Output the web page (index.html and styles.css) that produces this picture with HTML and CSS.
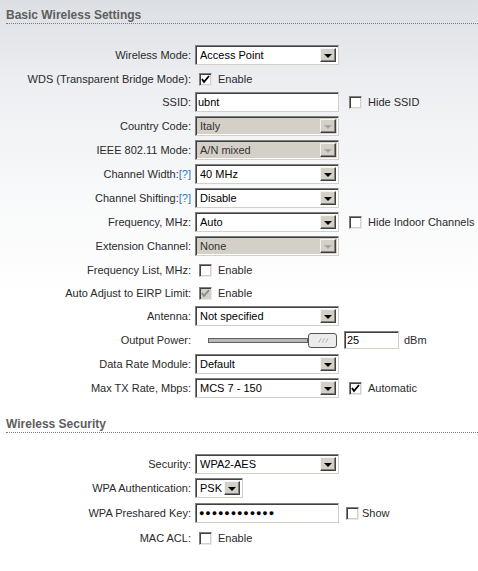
FILE: index.html
```html
<!DOCTYPE html>
<html>
<head>
<meta charset="utf-8">
<link rel="stylesheet" href="styles.css">
</head>
<body>
<div class="page">
  <h2 class="section-title">Basic Wireless Settings</h2>
  <div class="form first">
    <div class="row">
      <span class="lbl">Wireless Mode:</span>
      <div class="select"><span class="val">Access Point</span><span class="btn"><i class="arrow"></i></span></div>
    </div>
    <div class="row cbrow">
      <span class="lbl">WDS (Transparent Bridge Mode):</span>
      <span class="cb checked ml4"><svg viewBox="0 0 11 11"><polyline points="2,5 4,8 9,2"/></svg></span><span class="cbtext">Enable</span>
    </div>
    <div class="row">
      <span class="lbl">SSID:</span>
      <div class="input"><span class="val">ubnt</span></div>
      <span class="cb ml10"></span><span class="cbtext">Hide SSID</span>
    </div>
    <div class="row">
      <span class="lbl">Country Code:</span>
      <div class="select disabled"><span class="val">Italy</span><span class="btn"><i class="arrow"></i></span></div>
    </div>
    <div class="row">
      <span class="lbl">IEEE 802.11 Mode:</span>
      <div class="select disabled"><span class="val">A/N mixed</span><span class="btn"><i class="arrow"></i></span></div>
    </div>
    <div class="row">
      <span class="lbl">Channel Width:<a class="help">[?]</a></span>
      <div class="select"><span class="val">40 MHz</span><span class="btn"><i class="arrow"></i></span></div>
    </div>
    <div class="row">
      <span class="lbl">Channel Shifting:<a class="help">[?]</a></span>
      <div class="select"><span class="val">Disable</span><span class="btn"><i class="arrow"></i></span></div>
    </div>
    <div class="row">
      <span class="lbl">Frequency, MHz:</span>
      <div class="select"><span class="val">Auto</span><span class="btn"><i class="arrow"></i></span></div>
      <span class="cb ml10"></span><span class="cbtext">Hide Indoor Channels</span>
    </div>
    <div class="row">
      <span class="lbl">Extension Channel:</span>
      <div class="select disabled"><span class="val">None</span><span class="btn"><i class="arrow"></i></span></div>
    </div>
    <div class="row cbrow">
      <span class="lbl">Frequency List, MHz:</span>
      <span class="cb ml4"></span><span class="cbtext">Enable</span>
    </div>
    <div class="row cbrow">
      <span class="lbl">Auto Adjust to EIRP Limit:</span>
      <span class="cb checked disabled ml4"><svg viewBox="0 0 11 11"><polyline points="2,5 4,8 9,2"/></svg></span><span class="cbtext">Enable</span>
    </div>
    <div class="row">
      <span class="lbl">Antenna:</span>
      <div class="select"><span class="val">Not specified</span><span class="btn"><i class="arrow"></i></span></div>
    </div>
    <div class="row">
      <span class="lbl">Output Power:</span>
      <div class="slider">
        <span class="track"></span>
        <span class="thumb"><svg viewBox="0 0 29 15"><line x1="10" y1="10" x2="13" y2="5"/><line x1="14" y1="10" x2="17" y2="5"/><line x1="18" y1="10" x2="21" y2="5"/></svg></span>
      </div>
      <div class="input small"><span class="val">25</span></div>
      <span class="unit">dBm</span>
    </div>
    <div class="row">
      <span class="lbl">Data Rate Module:</span>
      <div class="select"><span class="val">Default</span><span class="btn"><i class="arrow"></i></span></div>
    </div>
    <div class="row">
      <span class="lbl">Max TX Rate, Mbps:</span>
      <div class="select"><span class="val">MCS 7 - 150</span><span class="btn"><i class="arrow"></i></span></div>
      <span class="cb checked ml10"><svg viewBox="0 0 11 11"><polyline points="2,5 4,8 9,2"/></svg></span><span class="cbtext">Automatic</span>
    </div>
  </div>

  <h2 class="section-title second">Wireless Security</h2>
  <div class="form">
    <div class="row">
      <span class="lbl">Security:</span>
      <div class="select"><span class="val">WPA2-AES</span><span class="btn"><i class="arrow"></i></span></div>
    </div>
    <div class="row r25">
      <span class="lbl">WPA Authentication:</span>
      <div class="select narrow"><span class="val">PSK</span><span class="btn"><i class="arrow"></i></span></div>
    </div>
    <div class="row r25">
      <span class="lbl">WPA Preshared Key:</span>
      <div class="input"><span class="val dots">&#9679;&#9679;&#9679;&#9679;&#9679;&#9679;&#9679;&#9679;&#9679;&#9679;&#9679;&#9679;</span></div>
      <span class="cb ml7"></span><span class="cbtext tight">Show</span>
    </div>
    <div class="row cbrow">
      <span class="lbl">MAC ACL:</span>
      <span class="cb ml4"></span><span class="cbtext">Enable</span>
    </div>
  </div>
</div>
</body>
</html>
```

FILE: styles.css
```css
html, body {
  margin: 0;
  padding: 0;
}
body {
  width: 478px;
  height: 571px;
  overflow: hidden;
  background: linear-gradient(to bottom, #dcdfe4 0px, #eceef1 80px, #f7f8f9 180px, #ffffff 300px);
  font-family: "Liberation Sans", Arial, sans-serif;
  font-size: 11px;
  color: #222;
}
.page {
  padding-top: 8px;
}
.section-title {
  margin: 0 0 0 6px;
  padding: 0 0 1px 0;
  font-size: 12px;
  line-height: 14px;
  font-weight: bold;
  color: #5e5e5e;
  border-bottom: 1px dotted #7a7a7a;
}
.section-title.second {
  margin-top: 19px;
}
.form {
  margin-top: 21px;
}
.row {
  display: flex;
  align-items: center;
  height: 20px;
  margin-bottom: 4px;
  white-space: nowrap;
}
.row.cbrow {
  margin-bottom: 3px;
}
.row.r25 {
  margin-bottom: 5px;
}
.lbl {
  width: 191px;
  padding-right: 4px;
  text-align: right;
  color: #2a2a2a;
}
.help {
  color: #2b7bbf;
}
.select, .input {
  box-sizing: border-box;
  width: 144px;
  height: 20px;
  display: flex;
  align-items: stretch;
  background: #fff;
  border: 1px solid;
  border-color: #7f7f7f #d4d0c8 #d4d0c8 #7f7f7f;
  box-shadow: inset 1px 1px 0 #404040, inset -1px -1px 0 #ffffff;
  color: #000;
}
.select.disabled {
  background: #d4d0c8;
  color: #333;
}
.select.narrow {
  width: 48px;
}
.val {
  flex: 1;
  padding: 0 0 0 4px;
  line-height: 18px;
  overflow: hidden;
}
.input .val {
  padding-left: 2px;
}
.val.dots {
  font-size: 9px;
  letter-spacing: 0.9px;
  padding-left: 3px;
}
.btn {
  box-sizing: border-box;
  width: 16px;
  margin: 2px 2px 2px 0;
  background: #d4d0c8;
  border: 1px solid;
  border-color: #f4f3f0 #404040 #404040 #f4f3f0;
  box-shadow: inset -1px -1px 0 #808080;
  display: flex;
  align-items: center;
  justify-content: center;
}
.arrow {
  display: block;
  width: 0;
  height: 0;
  border-left: 4px solid transparent;
  border-right: 4px solid transparent;
  border-top: 4px solid #000;
  margin-top: 1px;
}
.select.disabled .arrow {
  border-top-color: #a5a5a5;
}
.cb {
  box-sizing: border-box;
  width: 13px;
  height: 13px;
  background: #fff;
  border: 1px solid;
  border-color: #7f7f7f #e8e8e8 #e8e8e8 #7f7f7f;
  box-shadow: inset 1px 1px 0 #404040, inset -1px -1px 0 #d4d0c8;
  display: flex;
  align-items: center;
  justify-content: center;
}
.cb svg {
  width: 11px;
  height: 11px;
  fill: none;
  stroke: #000;
  stroke-width: 1.8;
}
.cb.disabled {
  background: #d4d0c8;
}
.cb.disabled svg {
  stroke: #8a8a8a;
}
.ml4 { margin-left: 4px; }
.ml7 { margin-left: 7px; }
.ml10 { margin-left: 10px; }
.cbtext {
  margin-left: 6px;
  color: #2a2a2a;
}
.cbtext.tight {
  margin-left: 3px;
}
.slider {
  width: 143px;
  display: flex;
  align-items: center;
  padding-left: 13px;
  box-sizing: border-box;
}
.track {
  box-sizing: border-box;
  width: 100px;
  height: 5px;
  background: #b8b8b8;
  border: 1px solid #606060;
}
.thumb {
  box-sizing: border-box;
  width: 29px;
  height: 15px;
  background: #ececec;
  border: 1px solid #555;
  border-radius: 3px;
  display: block;
}
.thumb svg {
  display: block;
  width: 27px;
  height: 13px;
  stroke: #a8a8a8;
  stroke-width: 1;
}
.input.small {
  width: 55px;
  height: 18px;
  margin-left: 6px;
}
.input.small .val {
  line-height: 16px;
}
.unit {
  margin-left: 5px;
  color: #2a2a2a;
}
```
